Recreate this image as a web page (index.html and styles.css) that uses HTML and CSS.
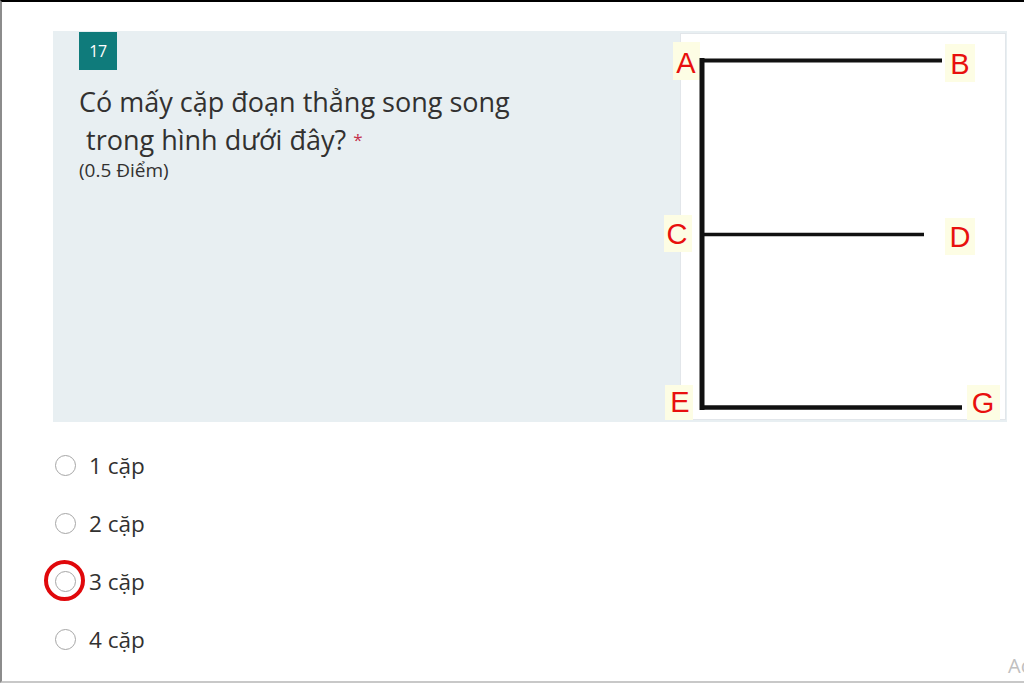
FILE: index.html
```html
<!DOCTYPE html>
<html lang="vi">
<head>
<meta charset="utf-8">
<link rel="stylesheet" href="styles.css">
</head>
<body>
<div class="page">
  <div class="card">
    <div class="card-left">
      <div class="badge">17</div>
      <div class="question">Có mấy cặp đoạn thẳng song song<br>&nbsp;trong hình dưới đây? <span class="star">*</span></div>
      <div class="points">(0.5 Điểm)</div>
    </div>
    <div class="figure">
      <svg class="fig-svg" width="326" height="387" viewBox="0 0 326 387">
        <g fill="#fdfde4">
          <rect x="-7" y="9" width="27" height="38"/>
          <rect x="265" y="11" width="30" height="38"/>
          <rect x="-16" y="182" width="28" height="37"/>
          <rect x="265" y="185" width="30" height="37"/>
          <rect x="-15" y="352" width="28" height="35"/>
          <rect x="287" y="352" width="33" height="35"/>
        </g>
        <g stroke="#111" stroke-linecap="butt" fill="none">
          <line x1="22" y1="25" x2="22" y2="377" stroke-width="5"/>
          <line x1="20" y1="27.5" x2="262" y2="27.5" stroke-width="4"/>
          <line x1="20" y1="201.5" x2="244" y2="201.5" stroke-width="3.5"/>
          <line x1="20" y1="374.5" x2="282" y2="374.5" stroke-width="4.5"/>
        </g>
        <g class="lbl" fill="#e8100e" text-anchor="middle">
          <text x="6" y="40">A</text>
          <text x="280" y="41">B</text>
          <text x="-3" y="211">C</text>
          <text x="280" y="214">D</text>
          <text x="0" y="379">E</text>
          <text x="303" y="380">G</text>
        </g>
      </svg>
    </div>
  </div>
  <div class="options">
    <div class="option"><span class="radio"></span><span class="opt-text">1 cặp</span></div>
    <div class="option"><span class="radio"></span><span class="opt-text">2 cặp</span></div>
    <div class="option marked"><span class="radio"></span><span class="opt-text">3 cặp</span><span class="ring"></span></div>
    <div class="option"><span class="radio"></span><span class="opt-text">4 cặp</span></div>
  </div>
  <div class="corner-text">Ac</div>
</div>
</body>
</html>
```

FILE: styles.css
```css
html, body {
  margin: 0;
  padding: 0;
  background: #fff;
}
body {
  font-family: "Open Sans", "Noto Sans", sans-serif;
  color: #323130;
}
.page {
  position: relative;
  width: 1024px;
  height: 683px;
  box-sizing: border-box;
  overflow: hidden;
  border-top: 2px solid #000;
  border-left: 2px solid #8c8c8c;
  border-bottom: 2px solid #c8c8c8;
  padding: 29px 17px 0 51px;
}
.card {
  display: flex;
  height: 391px;
  background: #e8eff2;
}
.card-left {
  flex: 1;
  padding-left: 26px;
  padding-top: 1px;
}
.badge {
  width: 38px;
  height: 38px;
  background: #0f7b7b;
  color: #fff;
  font-size: 16px;
  display: flex;
  align-items: center;
  justify-content: center;
  letter-spacing: -0.5px;
}
.question {
  margin-top: 13px;
  font-size: 27px;
  line-height: 38px;
  color: #323130;
  white-space: nowrap;
}
.star {
  color: #c4314b;
  font-size: 17px;
  vertical-align: 4px;
}
.points {
  font-size: 19px;
  line-height: 22px;
  margin-top: 0;
  color: #323130;
}
.figure {
  width: 324px;
  margin: 2px 1px 2px 0;
  background: #fff;
  border: 1px solid #e2e6ea;
  position: relative;
}
.fig-svg {
  display: block;
  overflow: visible;
  margin: -1px;
}
.lbl text {
  font-family: "Liberation Sans", Arial, sans-serif;
  font-size: 29px;
}
.options {
  margin-top: 14px;
  display: flex;
  flex-direction: column;
}
.option {
  position: relative;
  height: 58px;
  display: flex;
  align-items: center;
}
.radio {
  width: 19px;
  height: 19px;
  border: 1.5px solid #a6a6a6;
  border-radius: 50%;
  margin-left: 2px;
  background: #fff;
}
.opt-text {
  margin-left: 13px;
  font-size: 22.5px;
  color: #323130;
}
.ring {
  position: absolute;
  left: -9px;
  top: 8px;
  width: 33px;
  height: 33px;
  border: 4px solid #e0080b;
  border-radius: 50%;
}
.corner-text {
  position: absolute;
  left: 1006px;
  top: 650px;
  font-size: 20px;
  color: #c0c0c0;
}
```
